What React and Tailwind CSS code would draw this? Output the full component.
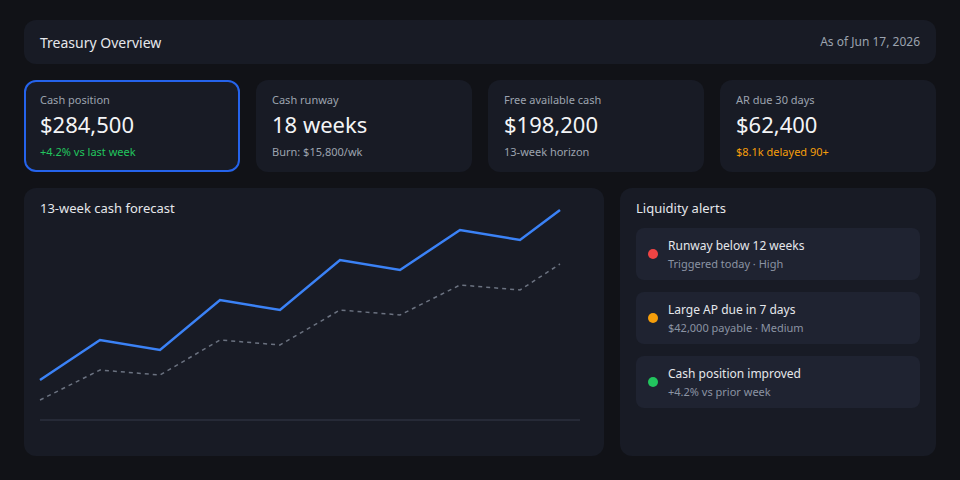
import React from "react";

const kpis = [
  { label: "Cash position", value: "$284,500", sub: "+4.2% vs last week", subClass: "text-[#22c55e]", active: true },
  { label: "Cash runway", value: "18 weeks", sub: "Burn: $15,800/wk", subClass: "text-[#9ca3af]" },
  { label: "Free available cash", value: "$198,200", sub: "13-week horizon", subClass: "text-[#9ca3af]" },
  { label: "AR due 30 days", value: "$62,400", sub: "$8.1k delayed 90+", subClass: "text-[#f59e0b]" },
];

const alerts = [
  { title: "Runway below 12 weeks", sub: "Triggered today · High", dot: "bg-[#ef4444]" },
  { title: "Large AP due in 7 days", sub: "$42,000 payable · Medium", dot: "bg-[#f59e0b]" },
  { title: "Cash position improved", sub: "+4.2% vs prior week", dot: "bg-[#22c55e]" },
];

// forecast series, in chart-local coordinates
const xs = [16, 76, 136, 196, 256, 316, 376, 436, 496, 536];
const actual = [162, 122, 132, 82, 92, 42, 52, 12, 22, -8];
const baseline = [182, 152, 157, 122, 127, 92, 97, 67, 72, 46];
const toPoints = (ys) => xs.map((x, i) => `${x},${ys[i]}`).join(" ");

function KpiCard({ label, value, sub, subClass, active }) {
  return (
    <div
      className={`flex-1 rounded-xl border-2 bg-[#181b25] px-[14px] pt-[10px] ${
        active ? "border-[#2563eb]" : "border-transparent"
      }`}
    >
      <div className="text-[11px] leading-4 text-[#9ca3af]">{label}</div>
      <div className="mt-0.5 text-[22px] leading-7 text-[#f3f4f6]">{value}</div>
      <div className={`mt-1.5 text-[11px] leading-4 ${subClass}`}>{sub}</div>
    </div>
  );
}

export default function App() {
  return (
    <div
      className="h-[480px] w-[960px] bg-[#111217] px-6 pt-5"
      style={{ fontFamily: '"Noto Sans", "Open Sans", sans-serif' }}
    >
      <header className="flex h-11 items-center justify-between rounded-xl bg-[#181b25] px-4">
        <span className="text-[14px] text-[#e5e7eb]">Treasury Overview</span>
        <span className="text-[12px] text-[#9ca3af]">As of Jun 17, 2026</span>
      </header>

      <div className="mt-4 flex h-[92px] gap-4">
        {kpis.map((k) => (
          <KpiCard key={k.label} {...k} />
        ))}
      </div>

      <div className="mt-4 flex h-[268px] gap-4">
        <section className="w-[580px] rounded-xl bg-[#181b25] pt-2.5">
          <h2 className="px-4 text-[13px] leading-5 text-[#e5e7eb]">13-week cash forecast</h2>
          <svg width="580" height="238" viewBox="0 0 580 238" className="block overflow-visible">
            <line x1="16" y1="202" x2="556" y2="202" stroke="#262a37" strokeWidth="2" />
            <polyline
              points={toPoints(baseline)}
              fill="none"
              stroke="#6b7280"
              strokeWidth="1.5"
              strokeDasharray="4 4"
            />
            <polyline
              points={toPoints(actual)}
              fill="none"
              stroke="#3b82f6"
              strokeWidth="2.5"
              strokeLinejoin="miter"
            />
          </svg>
        </section>

        <section className="flex-1 rounded-xl bg-[#181b25] px-4 pt-2.5">
          <h2 className="text-[13px] leading-5 text-[#e5e7eb]">Liquidity alerts</h2>
          <div className="mt-2.5 flex flex-col gap-3">
            {alerts.map((a) => (
              <div key={a.title} className="flex h-[52px] items-center gap-2.5 rounded-lg bg-[#1f2331] px-3">
                <span className={`h-2.5 w-2.5 shrink-0 rounded-full ${a.dot}`} />
                <div>
                  <div className="text-[12px] leading-5 text-[#e5e7eb]">{a.title}</div>
                  <div className="text-[11px] leading-4 text-[#8b93a3]">{a.sub}</div>
                </div>
              </div>
            ))}
          </div>
        </section>
      </div>
    </div>
  );
}
